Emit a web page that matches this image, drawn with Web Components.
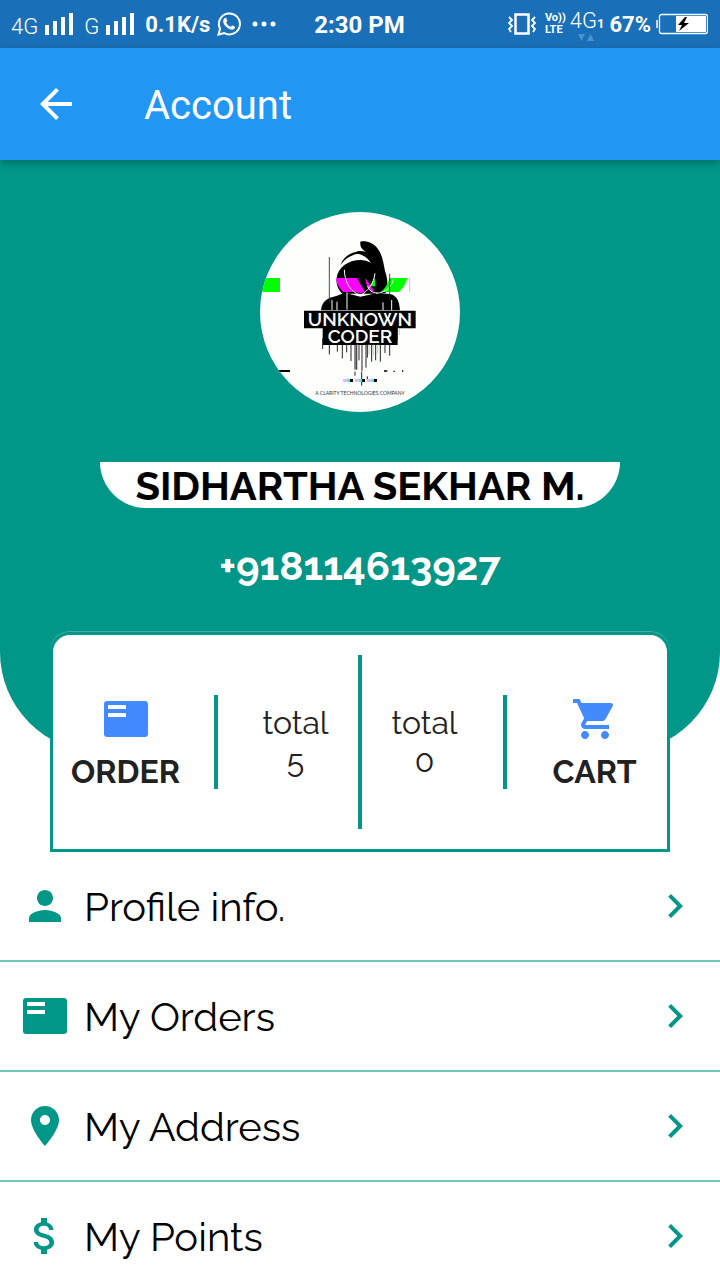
<!DOCTYPE html>
<html lang="en">
<head>
<meta charset="utf-8">
<meta name="viewport" content="width=device-width, initial-scale=1">
<title>Account</title>
<style>
  html, body { height: 100%; margin: 0; }
  body {
    background: #fff;
    color: #000;
    font-family: Raleway, Lato, sans-serif;
    --teal: #009688;
    --blue: #2196f3;
    --accent: #448aff;
  }
</style>
</head>
<body>
<account-page></account-page>

<script>
const ICONS = {
  back: '<path d="M20 11H7.83l5.59-5.59L12 4l-8 8 8 8 1.41-1.41L7.83 13H20v-2z"/>',
  person: '<path d="M12 12c2.21 0 4-1.79 4-4s-1.79-4-4-4-4 1.79-4 4 1.79 4 4 4zm0 2c-2.67 0-8 1.34-8 4v2h16v-2c0-2.66-5.33-4-8-4z"/>',
  list: '<path d="M21.500 3h-19C1.600 3 1 3.600 1 4.500v15c0 .9.600 1.500 1.500 1.500h19c.9 0 1.500-.6 1.500-1.500v-15c0-.9-.6-1.500-1.500-1.500zM12 11H3V9h9v2zm0-4H3V5h9v2z"/>',
  place: '<path d="M12 2C8.13 2 5 5.13 5 9c0 5.250 7 13 7 13s7-7.750 7-13c0-3.870-3.130-7-7-7zm0 9.500c-1.380 0-2.500-1.120-2.500-2.500s1.120-2.500 2.500-2.500 2.500 1.120 2.500 2.500-1.120 2.500-2.500 2.500z"/>',
  money: '<path d="M11.800 10.900c-2.270-.59-3-1.200-3-2.150 0-1.090 1.010-1.850 2.700-1.850 1.780 0 2.440.85 2.500 2.100h2.210c-.07-1.720-1.120-3.300-3.210-3.810V3h-3v2.160c-1.940.42-3.500 1.680-3.500 3.610 0 2.310 1.910 3.460 4.700 4.130 2.500.6 3 1.480 3 2.410 0 .69-.49 1.790-2.700 1.790-2.060 0-2.870-.92-2.980-2.100h-2.200c.12 2.190 1.760 3.420 3.680 3.830V21h3v-2.150c1.950-.37 3.500-1.500 3.500-3.550 0-2.840-2.430-3.810-4.700-4.400z"/>',
  chevron: '<path d="M10 6L8.590 7.410 13.170 12l-4.580 4.590L10 18l6-6z"/>',
  cart: '<path d="M7 18c-1.100 0-1.990.9-1.990 2S5.900 22 7 22s2-.9 2-2-.9-2-2-2zM1 2v2h2l3.600 7.590-1.350 2.450c-.16.28-.25.61-.25.96 0 1.100.9 2 2 2h12v-2H7.420c-.14 0-.25-.11-.25-.25l.03-.12.9-1.630h7.450c.75 0 1.410-.41 1.750-1.030l3.580-6.490c.08-.14.12-.31.12-.48 0-.55-.45-1-1-1H5.210l-.94-2H1zm16 16c-1.100 0-1.990.9-1.990 2s.89 2 1.990 2 2-.9 2-2-.9-2-2-2z"/>'
};

function define(name, html) {
  const template = document.createElement('template');
  template.innerHTML = html;
  customElements.define(name, class extends HTMLElement {
    constructor() {
      super();
      this.attachShadow({ mode: 'open' }).append(template.content.cloneNode(true));
    }
  });
}

/* 48px material glyph, coloured by the inherited text colour */
customElements.define('md-icon', class extends HTMLElement {
  connectedCallback() {
    if (this.shadowRoot) return;
    this.attachShadow({ mode: 'open' }).innerHTML = `
      <style>:host { display: block; flex: none; width: 48px; height: 48px; } svg { display: block; width: 100%; height: 100%; fill: currentColor; }</style>
      <svg viewBox="0 0 24 24" aria-hidden="true">${ICONS[this.getAttribute('name')]}</svg>`;
  }
});

define('signal-bars', `
  <style>:host { display: block; } svg { display: block; fill: #fff; }</style>
  <svg width="28" height="22" viewBox="0 0 28 22" aria-hidden="true"><path d="M0 12h4v10H0zM8 8h4v14H8zM16 4h4v18h-4zM24 0h4v22h-4z"/></svg>`);

define('status-bar', `
  <style>
    :host {
      display: grid; grid-template-columns: 1fr auto 1fr; align-items: center;
      height: 48px; padding: 0 12px 0 11px; box-sizing: border-box;
      background: #1a70b8; color: #fff; font: 700 22px/26px Roboto, sans-serif; white-space: nowrap;
    }
    div { display: flex; align-items: center; gap: 7px; }
    .left { gap: 11px; }
    .right { justify-content: flex-end; gap: 5px; }
    .text { padding-top: 2px; }
    .net { padding-top: 6px; font-weight: 300; }
    .time { padding-top: 2px; font-size: 24px; }
    .radio { gap: 4px; padding-left: 4px; }
    .volte { display: grid; font: 700 11px/12px Roboto, sans-serif; }
    .mobile { position: relative; font: 300 22px/26px Roboto, sans-serif; padding-bottom: 4px; }
    .mobile small { font-size: 13px; font-weight: 700; }
    .mobile svg { position: absolute; left: 8px; bottom: 0; }
    svg { display: block; flex: none; }
  </style>
  <div class="left">
    <div><span class="net">4G</span><signal-bars></signal-bars></div>
    <div><span class="net">G</span><signal-bars></signal-bars></div>
    <div>
      <span class="text">0.1K/s</span>
      <svg width="24" height="24" viewBox="0 0 24 24" fill="none" stroke="#fff" stroke-width="2" aria-hidden="true">
        <path d="M1.500 22.500l1.600-5.800A10.500 10.500 0 1 1 7.200 21z"/>
        <path d="M7.200 6.500c1-1.200 2-.8 2.300.2l.8 2c.2.700-1.300 1.400-1 2 .9 1.900 2.300 3.200 4.200 4 .7.200 1.300-1.500 2-1.200l2.100 1.100c.8.400.5 1.500-.3 2.200-1.700 1.500-4 .9-6.300-.6-2.200-1.400-4-3.600-4.600-5.800-.4-1.500 0-2.900.8-3.900z" fill="#fff" stroke="none"/>
      </svg>
      <svg width="32" height="24" viewBox="0 0 32 24" fill="#fff" aria-hidden="true"><circle cx="7" cy="12" r="2.500"/><circle cx="16" cy="12" r="2.500"/><circle cx="25" cy="12" r="2.500"/></svg>
    </div>
  </div>
  <span class="time">2:30 PM</span>
  <div class="right">
    <svg width="28" height="22" viewBox="0 0 28 22" fill="none" stroke="#fff" aria-hidden="true">
      <path d="M7.500 1.500h13v19h-13z" stroke-width="2.500"/>
      <path d="M1 4l3 3-3 3 3 3-3 3 2 3M27 4l-3 3 3 3-3 3 3 3-2 3" stroke-width="1.800"/>
    </svg>
    <div class="radio">
      <span class="volte"><span>Vo))</span><span>LTE</span></span>
      <span class="mobile">4G<small>1</small>
        <svg width="16" height="7" viewBox="0 0 16 7" fill="#4a93cf" aria-hidden="true"><path d="M0 0h7L3.500 7zM9 7h7L12.500 0z"/></svg>
      </span>
    </div>
    <span class="text">67%</span>
    <svg width="52" height="22" viewBox="0 0 52 22" aria-hidden="true">
      <rect x="3.500" y="1.500" width="48" height="19" rx="2" fill="none" stroke="#fff" stroke-width="1.300"/>
      <path d="M20 3h30v16H20z" fill="#fff"/><path d="M1 7v8" stroke="#fff" stroke-width="1.500"/>
      <path d="M29 4l-7 8h4l-3 6 10-8h-5l3-6z" fill="#000"/>
    </svg>
  </div>`);

define('app-bar', `
  <style>
    :host {
      display: flex; align-items: center; gap: 64px; height: 112px; padding: 0 32px; box-sizing: border-box;
      background: var(--blue); color: #fff; position: relative; z-index: 1;
      box-shadow: 0 3px 8px rgba(0,0,0,.25);
    }
    button { border: 0; padding: 0; background: none; color: inherit; }
    h1 { margin: 0; padding-top: 4px; font: 400 40px/48px Roboto, sans-serif; }
  </style>
  <button type="button" aria-label="Back"><md-icon name="back"></md-icon></button>
  <h1><slot></slot></h1>`);

define('user-avatar', `
  <style>
    :host { display: block; width: 200px; height: 200px; border-radius: 50%; overflow: hidden; background: #fdfffd; }
    svg { display: block; }
    .brand { font: 600 19px Raleway, Lato, sans-serif; fill: #fff; text-anchor: middle; }
    .tag { font: 400 5px Lato, sans-serif; fill: #333; text-anchor: middle; }
  </style>
  <svg width="200" height="200" viewBox="0 0 200 200" role="img" aria-label="Unknown Coder logo">
    <g transform="translate(-5 -7) scale(.33333)">
      <path d="M15 219h60v42H15z" fill="#0f0"/>
      <path d="M316 110c18-4 38 4 50 18 16 20 18 40 24 70 8 22 10 44 2 66h-40l4-64c-4-28-18-48-56-57 12-7 22-5 34-1-10-8-20-12-18-32z"/>
      <path d="M256 180c14-37 54-50 92-32-38-6-66-1-92 32z"/>
      <path d="M245 218c4-30 34-53 72-53 34 2 63 28 66 53 8 20 4 35-8 48H262c-14-14-19-30-17-48z"/>
      <path d="M244 219h62l24 42-14 3-20-3h-30c-12-10-22-24-22-42z" fill="#f0f"/>
      <path d="M331 219l25 37-6 5c-11-8-18-24-19-42z" fill="#f0f"/>
      <path d="M404 219h54c-7 18-14 34-28 42h-52c12-10 20-25 26-42z" fill="#0f0"/>
      <path d="M345 244l15-25v25z" fill="#0f0"/>
      <path d="M198 316c3-30 20-37 48-44l23-9 47 12 54-12 38 5c17 5 25 20 27 48z"/>
      <path d="M268 194c1 34 14 64 48 77 23-12 40-35 44-66M416 222c-7 26-25 41-52 43M338 243c4 15 14 19 29 21M276 262v52M246 290v26M384 292v24M410 285v30M231 285v30" fill="none" stroke="#fff" stroke-width="3"/>
      <path d="M223 156v140M404 206v80" stroke="#222" stroke-width="2.500"/>
      <path d="M224 219v42M464 219v42" stroke="#e4f" stroke-width="1.500"/>
      <path d="M147 317h335v53H147zM203 369h225v51H203z"/>
      <path d="M203 400v32M223 418v30M247 418v22M262 418v42M275 418v24M288 418v50M300 418v76M304 418v76M312 418v48M321 418v80M333 418v70M337 418v40M350 418v52M362 418v48M376 418v52M390 418v26M404 418v34M427 370v34M300 500v12M320 500v42M337 514v14" stroke="#222" stroke-width="3"/>
      <path d="M308 418v76M342 418v30M355 418v32M368 418v28M433 370v20" stroke="#aaa" stroke-width="2"/>
      <path d="M72 495h33v6H72zM387 496h10v4h-10zM415 497h5v3h-5zM441 496h4v4h-4z"/>
      <path d="M264 522h11v9h-11zM300 522h11v9h-11zM336 522h11v9h-11z" fill="#faf"/>
      <path d="M275 522h10v9h-10zM311 522h10v9h-10zM347 522h10v9h-10z" fill="#4ee"/>
      <path d="M285 522h9v9h-9zM321 522h9v9h-9zM357 522h9v9h-9z"/>
    </g>
    <text class="brand" x="100" y="114">UNKNOWN</text>
    <text class="brand" x="100" y="131">CODER</text>
    <text class="tag" x="100" y="183">A CLARITY TECHNOLOGIES COMPANY</text>
  </svg>`);

define('profile-hero', `
  <style>
    :host {
      display: flex; flex-direction: column; align-items: center; box-sizing: border-box;
      padding: 52px 100px 163px; background: var(--teal); border-radius: 0 0 100px 100px; text-align: center;
    }
    .name {
      align-self: stretch; margin: 50px 0 35px; border-radius: 0 0 46px 46px; padding-top: 2px;
      background: #fff; color: #000; font-size: 40px; line-height: 44px; font-weight: 700; white-space: nowrap;
    }
    .phone { color: #fff; font-size: 40px; line-height: 46px; font-weight: 700; }
    h2, p { margin: 0; }
  </style>
  <user-avatar></user-avatar>
  <h2 class="name"><slot name="name"></slot></h2>
  <p class="phone"><slot name="phone"></slot></p>`);

define('stat-link', `
  <style>
    :host { display: block; color: #212121; }
    a { display: flex; flex-direction: column; align-items: center; gap: 11px; height: 94px; color: inherit; text-decoration: none; font-size: 32px; font-weight: 700; line-height: 36px; }
    ::slotted(md-icon) { color: var(--accent); }
  </style>
  <a href="#"><slot name="icon"></slot><span><slot></slot></span></a>`);

define('stat-total', `
  <style>
    :host { display: grid; justify-items: center; color: #212121; font-size: 32px; line-height: 38px; font-weight: 400; }
  </style>
  <span>total</span><span><slot></slot></span>`);

define('summary-card', `
  <style>
    :host {
      display: grid; grid-template-columns: 145fr 35fr 125fr 4px 125fr 35fr 145fr; align-items: center;
      box-sizing: border-box; height: 220px; margin: -120px 50px 0; padding: 20px 0;
      background: #fff; border: 3px solid var(--teal); border-radius: 20px 20px 0 0; position: relative;
      box-shadow: 0 -1px 0 rgba(255,255,255,.25);
    }
    i { justify-self: center; width: 4px; height: 94px; background: var(--teal); }
    i.tall { height: 174px; }
  </style>
  <stat-link><md-icon slot="icon" name="list"></md-icon>ORDER</stat-link>
  <i></i>
  <stat-total>5</stat-total>
  <i class="tall"></i>
  <stat-total>0</stat-total>
  <i></i>
  <stat-link><md-icon slot="icon" name="cart"></md-icon>CART</stat-link>`);

define('menu-row', `
  <style>
    :host { display: block; }
    a {
      display: flex; align-items: center; gap: 15px; height: 110px; padding: 0 21px; box-sizing: border-box;
      border-bottom: 2px solid #73c4bc; color: #000; text-decoration: none;
      font-size: 40px; line-height: 48px; font-weight: 400;
    }
    span { flex: 1; padding-top: 2px; }
    md-icon, ::slotted(md-icon) { color: var(--teal); }
  </style>
  <a href="#"><slot name="icon"></slot><span><slot></slot></span><md-icon name="chevron"></md-icon></a>`);

define('account-page', `
  <style>
    :host { display: flex; flex-direction: column; height: 100vh; overflow: hidden; }
    main { flex: 1; min-height: 0; overflow-y: auto; scrollbar-width: none; }
  </style>
  <status-bar></status-bar>
  <app-bar>Account</app-bar>
  <main>
    <profile-hero><span slot="name">SIDHARTHA SEKHAR M.</span><span slot="phone">+918114613927</span></profile-hero>
    <summary-card></summary-card>
    <nav>
      <menu-row><md-icon slot="icon" name="person"></md-icon>Profile info.</menu-row>
      <menu-row><md-icon slot="icon" name="list"></md-icon>My Orders</menu-row>
      <menu-row><md-icon slot="icon" name="place"></md-icon>My Address</menu-row>
      <menu-row><md-icon slot="icon" name="money"></md-icon>My Points</menu-row>
    </nav>
  </main>`);
</script>
</body>
</html>
